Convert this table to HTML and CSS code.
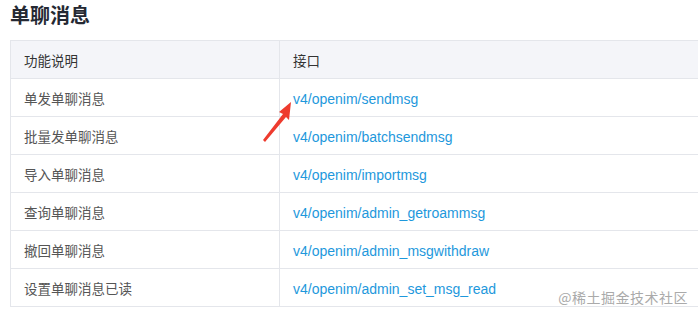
FILE: index.html
```html
<!DOCTYPE html>
<html lang="zh">
<head>
<meta charset="utf-8">
<link rel="stylesheet" href="styles.css">
</head>
<body>
<div class="page">
  <h2 class="title">单聊消息</h2>
  <div class="table-wrap">
    <table class="api">
      <thead>
        <tr><th class="c1">功能说明</th><th>接口</th></tr>
      </thead>
      <tbody>
        <tr><td class="c1">单发单聊消息</td><td><a>v4/openim/sendmsg</a></td></tr>
        <tr><td class="c1">批量发单聊消息</td><td><a>v4/openim/batchsendmsg</a></td></tr>
        <tr><td class="c1">导入单聊消息</td><td><a>v4/openim/importmsg</a></td></tr>
        <tr><td class="c1">查询单聊消息</td><td><a>v4/openim/admin_getroammsg</a></td></tr>
        <tr><td class="c1">撤回单聊消息</td><td><a>v4/openim/admin_msgwithdraw</a></td></tr>
        <tr><td class="c1">设置单聊消息已读</td><td><a>v4/openim/admin_set_msg_read</a></td></tr>
      </tbody>
    </table>
    <svg class="arrow" width="34" height="44" viewBox="0 0 34 44">
      <path d="M30 2 L18 12 L22 14 L2 40 L4 42 L25 17 L28 20 Z" fill="#ee3b2e"/>
    </svg>
  </div>
  <div class="watermark">@稀土掘金技术社区</div>
</div>
</body>
</html>
```
FILE: styles.css
```css
html, body {
  margin: 0;
  padding: 0;
  background: #fff;
  overflow: hidden;
}
.page {
  position: relative;
  width: 698px;
  height: 316px;
  overflow: hidden;
  font-family: "Noto Sans CJK SC", "Liberation Sans", sans-serif;
}
.title {
  margin: 0;
  padding: 1px 0 0 10px;
  font-size: 20px;
  line-height: 28px;
  font-weight: 700;
  color: #252933;
  height: 40px;
  box-sizing: border-box;
}
.table-wrap {
  position: relative;
  padding-left: 10px;
}
.api {
  border-collapse: collapse;
  width: 740px;
  font-size: 13.5px;
}
.api th, .api td {
  border: 1px solid #e4e6eb;
  height: 38px;
  padding: 0 13px;
  text-align: left;
  box-sizing: border-box;
  font-weight: 400;
}
.api th {
  background: #f4f5f9;
  color: #333;
}
.api td {
  color: #555;
}
.api .c1 {
  width: 269px;
}
.api a {
  color: #1e98dc;
  font-family: "Liberation Sans", Arial, sans-serif;
  font-size: 14px;
  text-decoration: none;
}
.arrow {
  position: absolute;
  left: 261px;
  top: 60px;
}
.watermark {
  position: absolute;
  right: 10px;
  top: 287px;
  font-size: 14px;
  color: #aaa;
  letter-spacing: 0.5px;
}
```
